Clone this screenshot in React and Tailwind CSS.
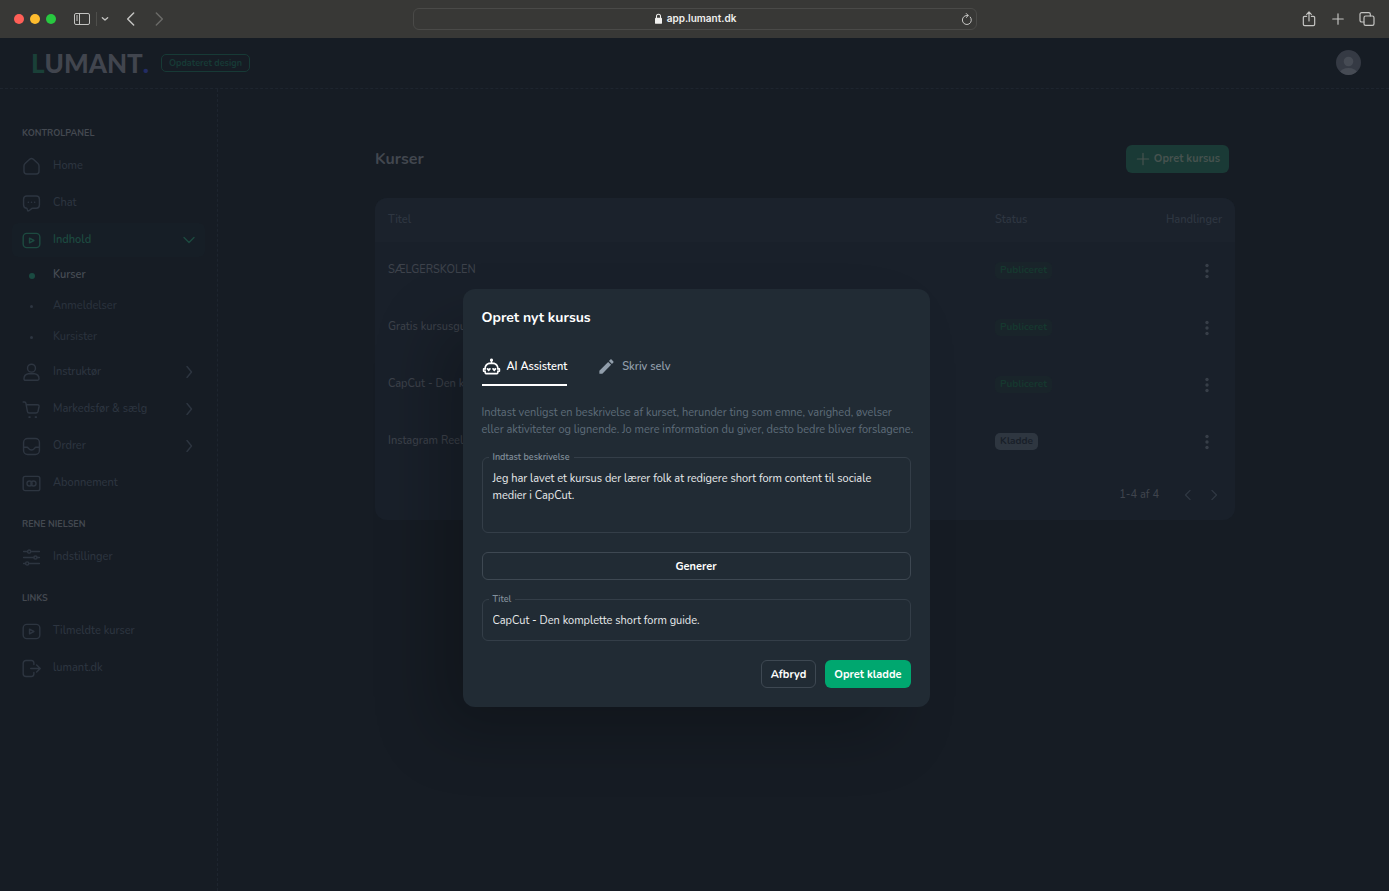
import React, { useState } from "react";

const Svg = ({ className = "size-[19px]", children }) => (
  <svg
    viewBox="0 0 24 24"
    className={`shrink-0 ${className}`}
    fill="none"
    stroke="currentColor"
    strokeWidth="1.8"
    strokeLinecap="round"
    strokeLinejoin="round"
    aria-hidden="true"
  >
    {children}
  </svg>
);

const icons = {
  home: <path d="M2.5 11.5c0-1.6.5-2.4 1.7-3.5l5.5-5.2c1.500-1.300 3.100-1.300 4.600 0l5.500 5.200c1.200 1.100 1.700 1.900 1.700 3.500V18c0 2.200-1.300 3.500-3.500 3.500H6c-2.200 0-3.500-1.300-3.500-3.500z" />,
  chat: (
    <>
      <path d="M6 2.5h12c2.500 0 4 1.500 4 4V14c0 2.500-1.500 4-4 4h-4.500c-2 0-3.500 3.500-6 3.500-.8 0-.7-3.500-1.500-3.500-2.500 0-4-1.500-4-4V6.500c0-2.500 1.500-4 4-4z" />
      <path d="M8 10.5h.01M12 10.5h.01M16 10.5h.01" strokeWidth="2" />
    </>
  ),
  play: (
    <>
      <rect x="1.5" y="3" width="21" height="18" rx="4.5" />
      <path d="M9.5 9v6l5.500-3z" />
    </>
  ),
  user: (
    <>
      <circle cx="12" cy="6.5" r="5" />
      <path d="M2.5 20c0-4 2-6 5.500-6.500h8c3.500.5 5.500 2.500 5.500 6.500 0 1.200-.6 1.700-1.700 1.700H4.200c-1.100 0-1.700-.5-1.700-1.700z" />
    </>
  ),
  cart: (
    <>
      <path d="M1.5 2.5h1.800c1 0 1.400.6 1.600 1.500l1.900 10.500c.2 1.300 1 2 2.200 2h8.500c1.500 0 2.300-.8 2.700-2l1.300-6c.3-1.600-.4-2.500-2-2.500H5.500" />
      <path d="M9 21.500h1M17 21.500h1" strokeWidth="2.2" />
    </>
  ),
  inbox: (
    <>
      <rect x="2" y="2" width="20" height="20" rx="5" />
      <path d="M2 13h4.500c1.800 0 1.700 3.500 5.500 3.500s3.700-3.500 5.500-3.500H22" />
    </>
  ),
  card: (
    <>
      <rect x="1.5" y="3" width="21" height="18" rx="2.5" />
      <circle cx="9.5" cy="12" r="3.2" />
      <circle cx="14.5" cy="12" r="3.2" />
    </>
  ),
  sliders: (
    <>
      <path d="M2 4.500h5M11 4.500h11M2 12h13M19 12h3M2 19.500h2.500M9 19.500h13" />
      <circle cx="9" cy="4.5" r="2" />
      <circle cx="17" cy="12" r="2" />
      <circle cx="6.5" cy="19.5" r="2" />
    </>
  ),
  exit: (
    <>
      <path d="M15 7V5c0-2-1-3-3-3H5C3 2 1.500 3.500 1.500 5.500v13c0 2 1.500 3.500 3.500 3.500h7c2 0 3-1 3-3v-2" />
      <path d="M11 12h11.500M18.500 7.500L23 12l-4.500 4.500" />
    </>
  ),
};

const sections = [
  {
    title: "KONTROLPANEL",
    items: [
      { label: "Home", icon: "home" },
      { label: "Chat", icon: "chat" },
      {
        label: "Indhold",
        icon: "play",
        active: true,
        children: ["Kurser", "Anmeldelser", "Kursister"],
      },
      { label: "Instruktør", icon: "user", more: true },
      { label: "Markedsfør & sælg", icon: "cart", more: true },
      { label: "Ordrer", icon: "inbox", more: true },
      { label: "Abonnement", icon: "card" },
    ],
  },
  { title: "RENE NIELSEN", items: [{ label: "Indstillinger", icon: "sliders" }] },
  {
    title: "LINKS",
    items: [
      { label: "Tilmeldte kurser", icon: "play" },
      { label: "lumant.dk", icon: "exit" },
    ],
  },
];

const courses = [
  { title: "SÆLGERSKOLEN", status: "Publiceret" },
  { title: "Gratis kursusguide", status: "Publiceret" },
  { title: "CapCut - Den komplette guide", status: "Publiceret" },
  { title: "Instagram Reels", status: "Kladde" },
];

function BrowserBar() {
  return (
    <div className="flex h-[38px] items-center bg-[#383836] px-3.5 pb-px text-[#c4c4c2]">
      <div className="flex flex-1 items-center">
        <div className="flex gap-1.5">
          <span className="size-2.5 rounded-full bg-[#ff5f57]" />
          <span className="size-2.5 rounded-full bg-[#febc2e]" />
          <span className="size-2.5 rounded-full bg-[#28c840]" />
        </div>
        <button aria-label="Sidebar" className="ml-[18px]">
          <svg viewBox="0 0 16 12" className="h-3 w-4" fill="none" stroke="currentColor">
            <rect x=".5" y=".5" width="15" height="11" rx="1.5" />
            <path d="M5.5.5v11M2 3h2M2 5h2M2 7h2" />
          </svg>
        </button>
        <span className="ml-1.5 h-3.5 w-px bg-[#4e4e4b]" />
        <button aria-label="Faner" className="ml-1">
          <Svg className="size-2">
            <path d="M4 8l8 7 8-7" strokeWidth="4" />
          </Svg>
        </button>
        <button aria-label="Tilbage" className="ml-3.5">
          <Svg className="size-4">
            <path d="M16 3l-9 9 9 9" strokeWidth="2.2" />
          </Svg>
        </button>
        <button aria-label="Frem" className="ml-3 text-[#6b6b68]">
          <Svg className="size-4">
            <path d="M8 3l9 9-9 9" strokeWidth="2.2" />
          </Svg>
        </button>
      </div>
      <div className="flex h-[22px] w-[42%] max-w-[564px] items-center rounded-md border border-[#4a4a48] px-[3px]">
        <div className="flex flex-1 items-center justify-center gap-[5px] pl-3.5 font-['Inter','Liberation_Sans',sans-serif] text-[10px] font-semibold text-[#f0f0ee]">
          <svg viewBox="0 0 8 12" className="h-[11px] w-[7px]" fill="currentColor">
            <rect x="0" y="5" width="8" height="7" rx="1" />
            <path d="M1.7 6V3.500a2.300 2.300 0 014.600 0V6" fill="none" stroke="currentColor" strokeWidth="1.2" />
          </svg>
          app.lumant.dk
        </div>
        <button aria-label="Genindlæs">
          <Svg className="size-3">
            <path d="M18.500 8A9 9 0 1112 5h2M10.500 1L14.500 5l-4 4" strokeWidth="2" />
          </Svg>
        </button>
      </div>
      <div className="flex flex-1 items-center justify-end gap-3.5">
        <button aria-label="Del">
          <Svg className="size-4">
            <path d="M8.500 8H5.500C4.300 8 3.500 8.800 3.500 10v10c0 1.200.8 2 2 2h13c1.200 0 2-.8 2-2V10c0-1.200-.8-2-2-2h-3M12 15V1.500M8.500 5L12 1.500 15.500 5" />
          </Svg>
        </button>
        <button aria-label="Ny fane">
          <Svg className="size-3.5">
            <path d="M12 3v18M3 12h18" strokeWidth="2" />
          </Svg>
        </button>
        <button aria-label="Vis faner">
          <Svg className="size-4">
            <rect x="7.5" y="7.5" width="15" height="14" rx="2.5" />
            <path d="M7.500 16.500H4c-1.500 0-2.500-1-2.500-2.500V5c0-1.500 1-2.500 2.500-2.500h10.500c1.500 0 2.500 1 2.500 2.500v2.500" />
          </Svg>
        </button>
      </div>
    </div>
  );
}

function Header() {
  return (
    <header className="flex h-[51px] items-center justify-between border-b border-dashed border-[#1e252f] pr-7 pb-px pl-[31px]">
      <div className="flex items-center gap-3">
        <a href="#" className="flex font-['Lato','Liberation_Sans',sans-serif] text-[26px] leading-7 font-black text-[#41454e]">
          <span className="text-[#1a4038]">L</span>UMANT<span className="text-[#232c64]">.</span>
        </a>
        <span className="rounded-[5px] border border-[#173a36] px-[7px] text-[9px] leading-4 font-bold text-[#173a36]">
          Opdateret design
        </span>
      </div>
      <button aria-label="Profil">
        <svg viewBox="0 0 25 25" className="size-[25px] rounded-full bg-[#353a44]" fill="#464b54">
          <circle cx="12.5" cy="11.5" r="4.8" />
          <ellipse cx="12.5" cy="23" rx="8.5" ry="5" />
        </svg>
      </button>
    </header>
  );
}

function NavItem({ item }) {
  return (
    <li>
      <a
        href="#"
        className={`flex h-[34px] items-center gap-3 rounded-md px-2.5 ${
          item.active ? "bg-[#161e26] font-semibold text-[#1d4a40]" : "font-medium text-[#2d3540]"
        }`}
      >
        <Svg>{icons[item.icon]}</Svg>
        <span className="flex-1">{item.label}</span>
        {item.active && (
          <Svg className="size-3">
            <path d="M2 7l10 10L22 7" strokeWidth="2.8" />
          </Svg>
        )}
        {item.more && (
          <Svg className="size-3">
            <path d="M8 1l9 11-9 11" strokeWidth="2.8" />
          </Svg>
        )}
      </a>
      {item.children && (
        <ul className="-mb-px pt-[3px]">
          {item.children.map((child, i) => (
            <li key={child}>
              <a
                href="#"
                className={`flex h-[31px] items-center gap-3 px-2.5 ${
                  i === 0 ? "font-semibold text-[#474c54]" : "font-medium text-[#2a323d]"
                }`}
              >
                <span className="flex w-[19px] justify-center">
                  <span
                    className={`rounded-full ${i === 0 ? "size-1.5 bg-[#1a4a41]" : "size-[3px] bg-[#2d3540]"}`}
                  />
                </span>
                {child}
              </a>
            </li>
          ))}
        </ul>
      )}
    </li>
  );
}

function Sidebar() {
  return (
    <nav className="w-[218px] shrink-0 border-r border-dashed border-[#1e252f] px-3 pt-5 text-[11px]">
      {sections.map((section) => (
        <div key={section.title} className="pt-4">
          <h2 className="mb-2 px-2.5 text-[9px] leading-4 font-bold text-[#444951]">{section.title}</h2>
          <ul className="flex flex-col gap-[3px]">
            {section.items.map((item) => (
              <NavItem key={item.label} item={item} />
            ))}
          </ul>
        </div>
      ))}
    </nav>
  );
}

function Courses() {
  return (
    <main className="min-w-0 flex-1 pt-14 pl-[3px] text-[11px]">
      <div className="mx-auto max-w-[860px]">
        <div className="flex items-center justify-between pr-1.5">
          <h1 className="text-base font-bold text-[#42474f]">Kurser</h1>
          <button className="flex h-7 items-center gap-[3px] rounded-md bg-[#1a3a36] px-[9px] font-bold text-[#46524f]">
            <Svg className="size-4">
              <path d="M12 3.500v17M3.500 12h17" />
            </Svg>
            Opret kursus
          </button>
        </div>
        <div className="mt-[25px] overflow-hidden rounded-xl bg-[#19202a]">
          <table className="w-full text-left text-[#3d424b]">
            <thead>
              <tr className="h-11 bg-[#1b222c] text-[#2e3641]">
                <th className="pl-[13px] font-semibold">Titel</th>
                <th className="w-[150px] font-semibold">Status</th>
                <th className="w-[90px] pr-[13px] text-right font-semibold">Handlinger</th>
              </tr>
            </thead>
            <tbody>
              {courses.map((course) => (
                <tr key={course.title} className="h-[57px]">
                  <td className="pl-[13px] font-medium">{course.title}</td>
                  <td>
                    <span
                      className={`inline-block rounded-[5px] px-[5px] text-[10px] leading-[17px] font-bold ${
                        course.status === "Kladde" ? "bg-[#2e3640] text-[#191f29]" : "bg-[#19242a] text-[#16382f]"
                      }`}
                    >
                      {course.status}
                    </span>
                  </td>
                  <td className="pr-5 text-right">
                    <button aria-label="Handlinger" className="align-middle">
                      <svg viewBox="0 0 16 16" className="size-4" fill="#373e48">
                        <circle cx="8" cy="2.5" r="1.7" />
                        <circle cx="8" cy="8" r="1.7" />
                        <circle cx="8" cy="13.5" r="1.7" />
                      </svg>
                    </button>
                  </td>
                </tr>
              ))}
            </tbody>
          </table>
          <div className="flex h-[50px] items-center justify-end pr-4 font-medium text-[#3f444d]">
            <span className="mr-6">1-4 af 4</span>
            <button aria-label="Forrige" className="mr-4 text-[#303843]">
              <Svg className="size-2.5">
                <path d="M17 1L6 12l11 11" strokeWidth="3" />
              </Svg>
            </button>
            <button aria-label="Næste" className="text-[#303843]">
              <Svg className="size-2.5">
                <path d="M7 1l11 11L7 23" strokeWidth="3" />
              </Svg>
            </button>
          </div>
        </div>
      </div>
    </main>
  );
}

function CreateDialog() {
  const [description, setDescription] = useState(
    "Jeg har lavet et kursus der lærer folk at redigere short form content til sociale medier i CapCut."
  );
  const [title, setTitle] = useState("CapCut - Den komplette short form guide.");

  return (
    <div className="absolute inset-0 flex items-start justify-center pt-[251px] pl-[3px]">
      <div
        role="dialog"
        aria-label="Opret nyt kursus"
        className="w-[467px] rounded-xl bg-[#212b34] p-[19px] text-[11px] leading-[17px] text-[#e9ebed] shadow-[-32px_32px_64px_-6px_#0000003d]"
      >
        <h2 className="text-sm leading-5 font-bold text-white">Opret nyt kursus</h2>
        <div role="tablist" className="mt-5 flex gap-[30px]">
          <button
            role="tab"
            aria-selected="true"
            className="flex h-[38px] items-center gap-1.5 border-b-2 border-white font-semibold text-white"
          >
            <svg viewBox="0 0 24 24" className="size-[19px]" fill="currentColor">
              <path d="M22 14h-1c0-3.870-3.130-7-7-7h-1V5.730A2 2 0 0012 2a2 2 0 00-1 3.730V7h-1c-3.870 0-7 3.130-7 7H2c-.55 0-1 .45-1 1v3c0 .55.45 1 1 1h1v1c0 1.110.89 2 2 2h14c1.110 0 2-.89 2-2v-1h1c.55 0 1-.45 1-1v-3c0-.55-.45-1-1-1m-1 3h-2v3H5v-3H3v-1h2v-2c0-2.760 2.240-5 5-5h4c2.760 0 5 2.240 5 5v2h2z" />
              <path d="M8.500 18.200L6.200 15.900c-.8-.9-.4-2.100.8-2.100.6 0 1.200.3 1.500.9.300-.6.900-.9 1.500-.9 1.200 0 1.600 1.200.8 2.100zM15.500 18.200l-2.300-2.300c-.8-.9-.4-2.100.8-2.100.6 0 1.200.3 1.500.9.300-.6.900-.9 1.500-.9 1.200 0 1.600 1.200.8 2.100z" />
            </svg>
            AI Assistent
          </button>
          <button role="tab" aria-selected="false" className="flex h-[38px] items-center gap-1.5 border-b-2 border-transparent font-semibold text-[#919eab]">
            <svg viewBox="0 0 24 24" className="size-[19px]" fill="currentColor">
              <path d="M20.710 7.040c.39-.39.39-1.040 0-1.410l-2.340-2.340c-.37-.39-1.020-.39-1.410 0l-1.840 1.830 3.750 3.750M3 17.250V21h3.750L17.810 9.930l-3.750-3.750z" />
            </svg>
            Skriv selv
          </button>
        </div>
        <p className="mt-[18px] -mr-3 text-[#5f6d7a]">
          Indtast venligst en beskrivelse af kurset, herunder ting som emne, varighed, øvelser
          <br />
          eller aktiviteter og lignende. Jo mere information du giver, desto bedre bliver forslagene.
        </p>
        <fieldset className="mt-3 rounded-md border border-[#343e48] px-1.5">
          <legend className="px-1 text-[9px] leading-[14px] font-semibold text-[#828f9b]">
            <label htmlFor="description">Indtast beskrivelse</label>
          </legend>
          <textarea
            id="description"
            rows="3"
            className="block h-[68px] w-full resize-none px-1 pt-1.5 outline-none"
            value={description}
            onChange={(e) => setDescription(e.target.value)}
          />
        </fieldset>
        <button className="mt-[19px] h-7 w-full rounded-md border border-[#3e4852] font-bold text-white">Generer</button>
        <fieldset className="mt-3 rounded-md border border-[#343e48] px-1.5">
          <legend className="px-1 text-[9px] leading-[14px] font-semibold text-[#828f9b]">
            <label htmlFor="title">Titel</label>
          </legend>
          <input
            id="title"
            className="block h-[34px] w-full px-1 pb-1.5 outline-none"
            value={title}
            onChange={(e) => setTitle(e.target.value)}
          />
        </fieldset>
        <div className="mt-[19px] flex justify-end gap-[9px]">
          <button className="h-7 rounded-md border border-[#3e4852] px-[9px] font-bold text-white">Afbryd</button>
          <button className="h-7 rounded-md bg-[#00a76f] px-[9px] font-bold text-white">Opret kladde</button>
        </div>
      </div>
    </div>
  );
}

export default function App() {
  return (
    <div className="flex min-h-screen flex-col bg-[#161c24] font-['Nunito','Noto_Sans',sans-serif]">
      <BrowserBar />
      <div className="relative flex flex-1 flex-col">
        <Header />
        <div className="flex flex-1">
          <Sidebar />
          <Courses />
        </div>
        <CreateDialog />
      </div>
    </div>
  );
}
